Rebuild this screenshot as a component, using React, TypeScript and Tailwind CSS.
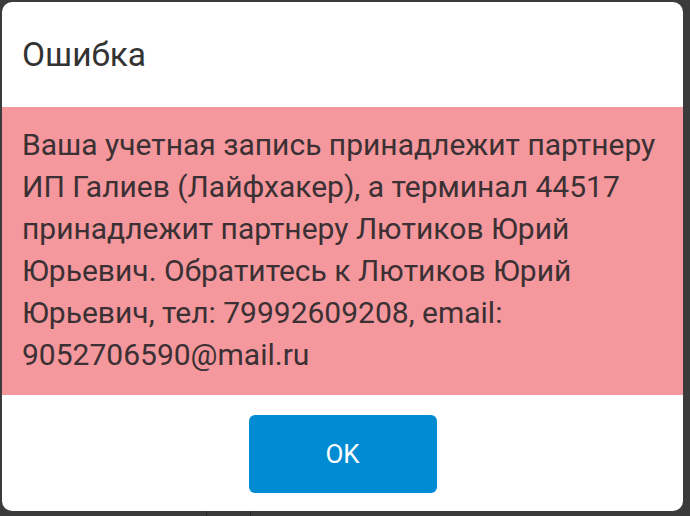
export default function App() {
  return (
    <div className="relative h-[516px] w-[690px] overflow-hidden bg-[#3b3b3b] font-['Roboto',sans-serif]">
      {/* backdrop hints below the dialog */}
      <div className="absolute bottom-0 left-[206px] h-[6px] w-px bg-[#262626]" />
      <div className="absolute bottom-0 left-[250px] h-[6px] w-px bg-[#262626]" />

      <div className="relative ml-[2px] mt-[2px] flex h-[509px] w-[681px] flex-col overflow-hidden rounded-[10px] bg-white">
        {/* Header */}
        <div className="flex h-[105px] items-center px-[20px]">
          <h2 className="text-[33.5px] font-normal leading-none text-[#333333]">Ошибка</h2>
        </div>

        {/* Message */}
        <div className="bg-[#f4989d] px-[20px] pb-[19px] pt-[17px] text-[30px] leading-[42px] text-[#3b3033]">
          Ваша учетная запись принадлежит партнеру ИП Галиев (Лайфхакер), а терминал 44517
          принадлежит партнеру Лютиков Юрий Юрьевич. Обратитесь к Лютиков Юрий Юрьевич, тел:
          79992609208, email: 9052706590@mail.ru
        </div>

        {/* Footer */}
        <div className="flex flex-1 items-start justify-center pt-[20px]">
          <button className="h-[78px] w-[188px] rounded-[6px] bg-[#008bd2] text-[26px] text-white">
            OK
          </button>
        </div>
      </div>
    </div>
  );
}
